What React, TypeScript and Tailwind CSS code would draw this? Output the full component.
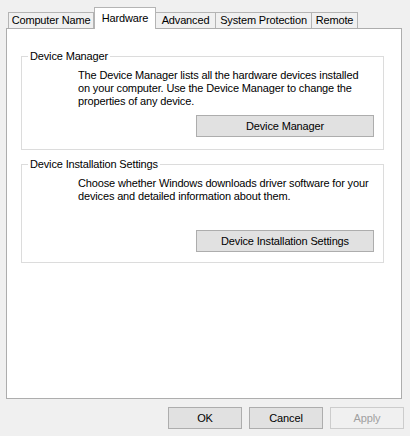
const tabs = [
  { label: "Computer Name", w: "w-[86px]", cls: "border-l border-r" },
  { label: "Hardware", w: "w-[62px]", cls: "selected" },
  { label: "Advanced", w: "w-[60px]", cls: "border-r" },
  { label: "System Protection", w: "w-[96px]", cls: "border-r" },
  { label: "Remote", w: "w-[46px]", cls: "border-r" },
];

function Tab({ label, w, cls }: { label: string; w: string; cls: string }) {
  if (cls === "selected") {
    return (
      <div
        className={`${w} h-[22px] -mb-px relative z-10 flex items-center justify-center bg-white border-l border-r border-t border-[#b4b4b4]`}
      >
        {label}
      </div>
    );
  }
  return (
    <div
      className={`${w} h-[16px] flex items-center justify-center bg-[#f0f0f0] border-t border-[#b4b4b4] ${cls}`}
    >
      {label}
    </div>
  );
}

function Button({ children, className = "", disabled = false }: { children: React.ReactNode; className?: string; disabled?: boolean }) {
  return (
    <button
      disabled={disabled}
      className={`h-[22px] flex items-center justify-center border ${
        disabled
          ? "bg-[#f0f0f0] border-[#cccccc] text-[#a0a0a0]"
          : "bg-[#e1e1e1] border-[#adadad] text-black"
      } ${className}`}
    >
      {children}
    </button>
  );
}

function Group({
  title,
  lines,
  action,
  gapTop,
  btnTop,
  padBottom,
}: {
  title: string;
  lines: string[];
  action: string;
  gapTop: string;
  btnTop: string;
  padBottom: string;
}) {
  return (
    <fieldset
      className={`w-[363px] min-w-0 border border-[#dcdcdc] pl-[6px] pr-[9px] pt-[6px] ${gapTop} ${padBottom} flex flex-col`}
    >
      <legend className="px-[2px] leading-[14px]">{title}</legend>
      <p className="ml-[50px] leading-[13px] whitespace-nowrap">
        {lines.map((l, i) => (
          <span key={i} className="block">
            {l}
          </span>
        ))}
      </p>
      <Button className={`w-[178px] self-end ${btnTop}`}>{action}</Button>
    </fieldset>
  );
}

export default function App() {
  return (
    <div
      className="w-[410px] h-[436px] bg-[#f0f0f0] flex flex-col text-[11px] tracking-[-0.15px] text-black"
      style={{ fontFamily: '"Liberation Sans", Arial, sans-serif' }}
    >
      {/* Tabs */}
      <div className="flex items-end h-[28px] pl-[8px]">
        {tabs.map((t) => (
          <Tab key={t.label} {...t} />
        ))}
      </div>

      {/* Tab page */}
      <div className="ml-[6px] mr-[8px] h-[371px] bg-white border border-[#adadad] pl-[14px] pr-[17px]">
        <Group
          title="Device Manager"
          lines={[
            "The Device Manager lists all the hardware devices installed",
            "on your computer. Use the Device Manager to change the",
            "properties of any device.",
          ]}
          action="Device Manager"
          gapTop="mt-[20px]"
          btnTop="mt-[7px]"
          padBottom="pb-[12px]"
        />
        <Group
          title="Device Installation Settings"
          lines={[
            "Choose whether Windows downloads driver software for your",
            "devices and detailed information about them.",
          ]}
          action="Device Installation Settings"
          gapTop="mt-[7px]"
          btnTop="mt-[27px]"
          padBottom="pb-[10px]"
        />
      </div>

      {/* Dialog buttons */}
      <div className="flex justify-end gap-[7px] pr-[6px] mt-[8px]">
        <Button className="w-[74px]">OK</Button>
        <Button className="w-[74px]">Cancel</Button>
        <Button className="w-[74px]" disabled>
          Apply
        </Button>
      </div>
    </div>
  );
}
